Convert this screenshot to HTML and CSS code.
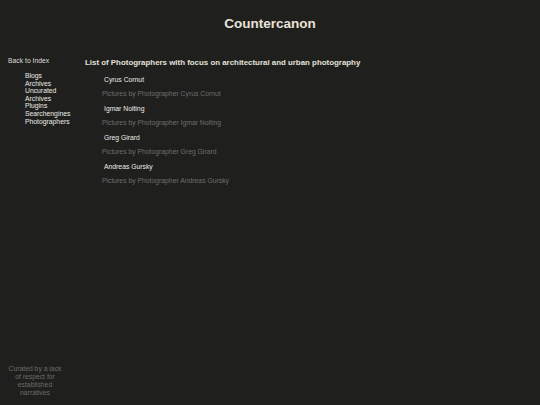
FILE: index.html
```html
<!DOCTYPE html>
<html>
<head>
<meta charset="utf-8">
<link rel="stylesheet" href="styles.css">
</head>
<body>
<header class="site-header">
  <h1 class="site-title">Countercanon</h1>
</header>
<div class="layout">
  <aside class="sidebar">
    <nav class="nav">
      <a class="nav-back" href="#">Back to Index</a>
      <ul class="nav-list">
        <li><a href="#">Blogs</a></li>
        <li><a href="#">Archives</a></li>
        <li><a href="#">Uncurated<br>Archives</a></li>
        <li><a href="#">Plugins</a></li>
        <li><a href="#">Searchengines</a></li>
        <li><a href="#">Photographers</a></li>
      </ul>
    </nav>
    <p class="tagline">Curated by a lack of respect for established narratives</p>
  </aside>
  <main class="content">
    <h2 class="page-heading">List of Photographers with focus on architectural and urban photography</h2>
    <ul class="photographers">
      <li class="entry">
        <a class="entry-name" href="#">Cyrus Cornut</a>
        <p class="entry-desc">Pictures by Photographer Cyrus Cornut</p>
      </li>
      <li class="entry">
        <a class="entry-name" href="#">Igmar Nolting</a>
        <p class="entry-desc">Pictures by Photographer Igmar Nolting</p>
      </li>
      <li class="entry">
        <a class="entry-name" href="#">Greg Girard</a>
        <p class="entry-desc">Pictures by Photographer Greg Girard</p>
      </li>
      <li class="entry">
        <a class="entry-name" href="#">Andreas Gursky</a>
        <p class="entry-desc">Pictures by Photographer Andreas Gursky</p>
      </li>
    </ul>
  </main>
</div>
</body>
</html>
```

FILE: styles.css
```css
html, body {
  margin: 0;
  padding: 0;
  height: 100%;
}
body {
  background: #1f201e;
  color: #e6e2da;
  font-family: "Liberation Sans", Arial, sans-serif;
  display: flex;
  flex-direction: column;
}
a {
  color: #ecebe6;
  text-decoration: none;
}
.site-header {
  padding-top: 16px;
  height: 38px;
}
.site-title {
  margin: 0;
  text-align: center;
  font-size: 13.5px;
  font-weight: bold;
  color: #e9e3d6;
}
.layout {
  flex: 1;
  display: flex;
}
.sidebar {
  width: 80px;
  flex: none;
  display: flex;
  flex-direction: column;
  justify-content: space-between;
  padding-bottom: 8px;
}
.nav {
  padding-left: 8px;
  padding-top: 3px;
}
.nav-back {
  display: block;
  font-size: 6.8px;
  line-height: 8px;
  color: #dcdcd8;
}
.nav-list {
  list-style: none;
  margin: 7px 0 0 17px;
  padding: 0;
  font-size: 6.8px;
  line-height: 7.6px;
}
.tagline {
  margin: 0 0 0 7px;
  width: 56px;
  text-align: center;
  font-size: 6.8px;
  line-height: 8px;
  color: #6b6b69;
}
.content {
  flex: 1;
  padding-left: 5px;
}
.page-heading {
  margin: 4px 0 0;
  font-size: 7.9px;
  line-height: 10px;
  font-weight: bold;
  color: #e3e0da;
}
.photographers {
  list-style: none;
  margin: 8px 0 0;
  padding: 0 0 0 17px;
}
.entry {
  height: 29px;
}
.entry-name {
  display: block;
  font-size: 6.8px;
  line-height: 8px;
  padding-left: 2px;
  color: #ecebe6;
}
.entry-desc {
  margin: 6px 0 0;
  font-size: 6.8px;
  line-height: 8px;
  color: #6d6e6b;
}
```
